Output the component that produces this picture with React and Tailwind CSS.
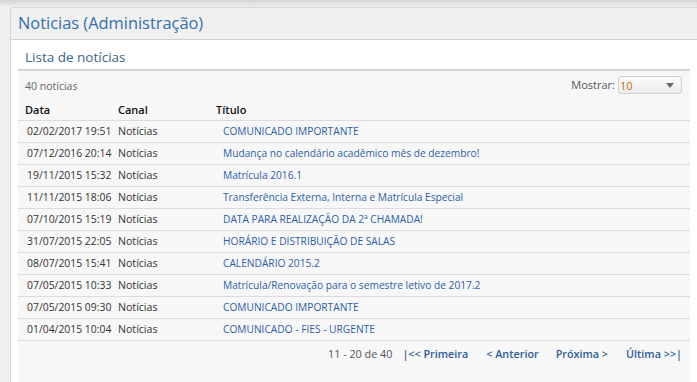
import React from "react";

const rows = [
  ["02/02/2017 19:51", "COMUNICADO IMPORTANTE"],
  ["07/12/2016 20:14", "Mudança no calendário acadêmico mês de dezembro!"],
  ["19/11/2015 15:32", "Matrícula 2016.1"],
  ["11/11/2015 18:06", "Transferência Externa, Interna e Matrícula Especial"],
  ["07/10/2015 15:19", "DATA PARA REALIZAÇÃO DA 2ª CHAMADA!"],
  ["31/07/2015 22:05", "HORÁRIO E DISTRIBUIÇÃO DE SALAS"],
  ["08/07/2015 15:41", "CALENDÁRIO 2015.2"],
  ["07/05/2015 10:33", "Matrícula/Renovação para o semestre letivo de 2017.2"],
  ["07/05/2015 09:30", "COMUNICADO IMPORTANTE"],
  ["01/04/2015 10:04", "COMUNICADO - FIES - URGENTE"],
];

export default function App() {
  return (
    <div
      className="w-[697px] h-[382px] overflow-hidden bg-[#efefef]"
      style={{ fontFamily: '"Open Sans", "Noto Sans", sans-serif' }}
    >
      {/* top shade */}
      <div className="h-[7px] bg-gradient-to-b from-[#d4d4d4] to-[#efefef]" />

      <div className="ml-[10px] h-[375px] rounded-tl-[4px] border-l border-t border-[#d6d6d6] bg-[#f0f0f0] flex flex-col">
        <div className="h-[31px] flex items-center pl-[7px]">
          <h1 className="text-[16.4px] text-[#3471ad] leading-none">Noticias (Administração)</h1>
        </div>

        <div className="flex-1 bg-white border-t border-[#cfcfcf] flex flex-col">
          <div className="h-[29px] flex items-center pl-[14px] pt-[7px]">
            <h2 className="text-[13.5px] text-[#3d6587] leading-none">Lista de notícias</h2>
          </div>

          <div className="flex-1 ml-[7px] w-[672px] bg-[#f7f7f7] border-t-2 border-[#d3d3d3] flex flex-col">
            <div className="h-[28px] flex items-center justify-between pl-[7px] pr-[8px]">
              <span className="text-[10.5px] text-[#666] pt-[3px]">40 notícias</span>
              <div className="flex items-center gap-[3px]">
                <span className="text-[11px] text-[#555]">Mostrar:</span>
                <div className="w-[64px] h-[18px] rounded-[3px] border border-[#cfcfcf] bg-gradient-to-b from-[#fbfbfb] to-[#ececec] flex items-center justify-between pl-[1px] pr-[7px]">
                  <span className="text-[11px] text-[#c86a00] leading-none">10</span>
                  <svg width="8" height="5" viewBox="0 0 8 5">
                    <path d="M0 0 L8 0 L4 5 Z" fill="#666" />
                  </svg>
                </div>
              </div>
            </div>

            <div className="text-[11px] text-[#222] whitespace-nowrap">
              <div className="h-[22px] flex items-center pt-[1px] font-semibold text-[#111] border-b border-[#dcdcdc]">
                <div className="w-[100px] pl-[7px]">Data</div>
                <div className="w-[98px]">Canal</div>
                <div className="flex-1">Título</div>
              </div>
              {rows.map(([d, t], i) => (
                <div key={i} className="h-[22px] flex items-center pt-[1px] border-b border-[#dcdcdc] text-[10.4px]">
                  <div className="w-[100px] pl-[9px] text-[#333]">{d}</div>
                  <div className="w-[98px] text-[#333] text-[10.6px]">Notícias</div>
                  <div className="flex-1 pl-[7px]">
                    <a className="text-[#2c5fa6] text-[10.2px]">{t}</a>
                  </div>
                </div>
              ))}
            </div>

            <div className="h-[26px] flex items-center pt-[1px] justify-end pr-[8px] text-[10.8px]">
              <span className="text-[#555] mr-[10px]">11 - 20 de 40</span>
              <a className="font-semibold text-[#2d5c98] mr-[18px]">|&lt;&lt; Primeira</a>
              <a className="font-semibold text-[#2d5c98] mr-[17px]">&lt; Anterior</a>
              <a className="font-semibold text-[#2d5c98] mr-[18px]">Próxima &gt;</a>
              <a className="font-semibold text-[#2d5c98]">Última &gt;&gt;|</a>
            </div>
          </div>
        </div>
      </div>
    </div>
  );
}
